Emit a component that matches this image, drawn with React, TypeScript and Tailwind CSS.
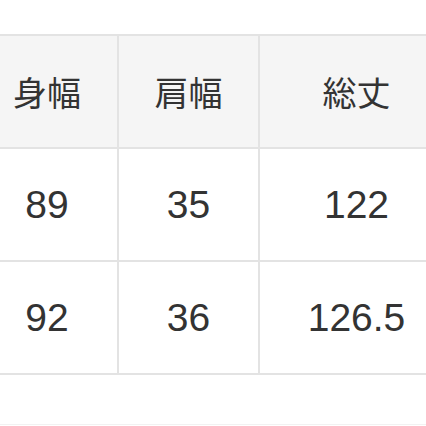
export default function App() {
  const head = ["身幅", "肩幅", "総丈"];
  const rows = [
    ["89", "35", "122"],
    ["92", "36", "126.5"],
  ];
  return (
    <div
      className="w-[426px] h-[426px] overflow-hidden bg-white pt-[34px] text-[#333]"
      style={{ fontFamily: '"Noto Sans CJK JP", "Noto Sans", sans-serif' }}
    >
      <table className="ml-[-25px] border-collapse table-fixed w-[478px]">
        <colgroup>
          <col className="w-[142px]" />
          <col className="w-[141px]" />
          <col className="w-[195px]" />
        </colgroup>
        <thead>
          <tr className="bg-[#f5f5f5]">
            {head.map((h) => (
              <th
                key={h}
                className="h-[113px] border-2 border-[#e3e3e3] text-[34px] font-normal text-center leading-none"
              >
                {h}
              </th>
            ))}
          </tr>
        </thead>
        <tbody>
          {rows.map((r, i) => (
            <tr key={i}>
              {r.map((c, j) => (
                <td
                  key={j}
                  className="h-[113px] border-2 border-[#e3e3e3] text-[39px] text-center leading-none font-['Liberation_Sans',sans-serif]"
                >
                  {c}
                </td>
              ))}
            </tr>
          ))}
        </tbody>
      </table>
      <div className="mt-[49px] border-t border-[#f2f2f2]" />
    </div>
  );
}
